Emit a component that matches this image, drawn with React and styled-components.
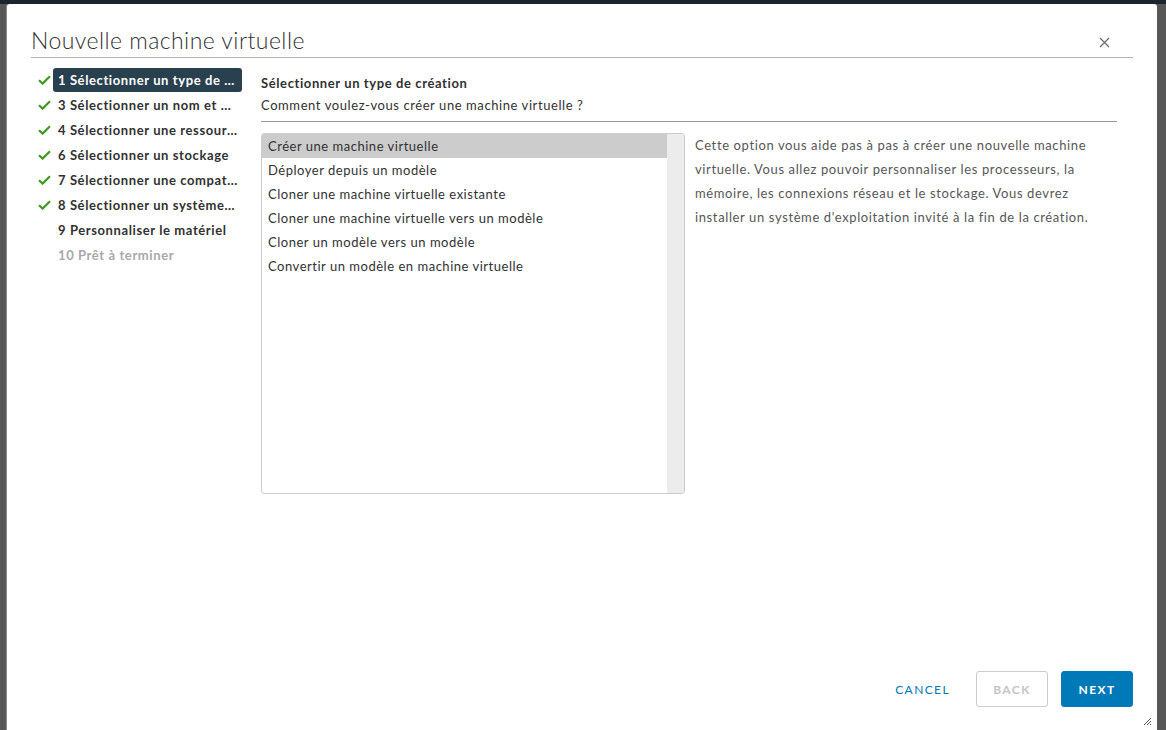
import React from "react";
import styled, { createGlobalStyle } from "styled-components";

const GlobalStyle = createGlobalStyle`
  html, body {
    margin: 0;
    padding: 0;
    height: 100%;
    overflow: hidden;
  }
  body {
    font-family: Lato, "Noto Sans", "Liberation Sans", sans-serif;
    background: #575757;
    color: #313131;
  }
`;

// styled-components
const Backdrop = styled.div`
  height: 730px;
  background: linear-gradient(#1c252b 0, #1c252b 4px, #575757 4px);
  padding: 4px 9px 0 7px;
  box-sizing: border-box;
`;

const Modal = styled.div`
  position: relative;
  height: 726px;
  background: #fff;
  border-radius: 3px 3px 0 0;
  box-shadow: -1px 0 0 #8a8a8a;
  display: flex;
  flex-direction: column;
  padding: 0 24px;
  box-sizing: border-box;
`;

const Header = styled.div`
  display: flex;
  align-items: flex-end;
  justify-content: space-between;
  height: 54px;
  padding-bottom: 3px;
  box-sizing: border-box;
  border-bottom: 1px solid #b3b3b3;
`;

const Title = styled.h3`
  margin: 0;
  font-size: 23px;
  line-height: 28px;
  font-weight: 300;
  letter-spacing: 0.45px;
  color: #313131;
`;

const CloseButton = styled.button`
  border: 0;
  background: none;
  padding: 0;
  margin: 0 23px 6px 0;
  width: 12px;
  height: 12px;
  display: flex;
  align-items: center;
  justify-content: center;
  cursor: pointer;
`;

const Body = styled.div`
  flex: 1;
  display: grid;
  grid-template-columns: 230px 1fr;
  padding-right: 16px;
`;

const Nav = styled.ul`
  list-style: none;
  margin: 0;
  padding: 10px 0 0 7px;
`;

const NavItem = styled.li`
  display: flex;
  align-items: center;
  height: 24px;
  margin-bottom: 1px;
`;

const CheckSlot = styled.span`
  width: 15px;
  display: flex;
  align-items: center;
  justify-content: flex-start;
`;

const NavLabel = styled.span`
  width: 189px;
  box-sizing: border-box;
  height: 24px;
  line-height: 24px;
  padding: 0 4px 0 5px;
  border-radius: 3px;
  font-size: 13px;
  font-weight: 700;
  letter-spacing: 0.6px;
  white-space: nowrap;
  overflow: hidden;
  text-overflow: ellipsis;
  background: ${(p) => (p.$active ? "#29414e" : "transparent")};
  color: ${(p) => (p.$active ? "#fff" : p.$disabled ? "#a8a8a8" : "#313131")};
`;

const Content = styled.div`
  padding-top: 15px;
  display: flex;
  flex-direction: column;
`;

const StepHeading = styled.div`
  font-size: 13px;
  font-weight: 700;
  line-height: 20px;
  letter-spacing: 0.6px;
  color: #313131;
`;

const StepSub = styled.div`
  font-size: 13px;
  line-height: 20px;
  letter-spacing: 0.58px;
  margin-top: 2px;
  padding-bottom: 6px;
  border-bottom: 1px solid #9a9a9a;
  color: #313131;
`;

const Split = styled.div`
  display: flex;
  gap: 10px;
  margin-top: 11px;
`;

const ListBox = styled.div`
  width: 424px;
  height: 361px;
  box-sizing: border-box;
  border: 1px solid #ccc;
  border-radius: 3px;
  display: flex;
  overflow: hidden;
`;

const Options = styled.ul`
  list-style: none;
  margin: 0;
  padding: 0;
  flex: 1;
`;

const Option = styled.li`
  height: 24px;
  line-height: 24px;
  padding: 0 6px;
  font-size: 13px;
  letter-spacing: 0.52px;
  color: #313131;
  background: ${(p) => (p.$selected ? "#ccc" : "transparent")};
  cursor: pointer;
`;

const ScrollTrack = styled.div`
  width: 17px;
  background: #ececec;
`;

const Description = styled.p`
  margin: 0;
  width: 422px;
  font-size: 13px;
  line-height: 24px;
  letter-spacing: 0.62px;
  color: #565656;
`;

const Footer = styled.div`
  display: flex;
  justify-content: flex-end;
  gap: 13px;
  padding: 0 0 23px;
`;

const Button = styled.button`
  height: 36px;
  min-width: 72px;
  padding: 0 12px;
  border-radius: 3px;
  font-family: inherit;
  font-size: 12px;
  letter-spacing: 1.4px;
  text-transform: uppercase;
  cursor: pointer;
  border: 1px solid
    ${(p) =>
      p.$variant === "primary" ? "#0079b8" : p.$variant === "flat" ? "transparent" : "#ccc"};
  background: ${(p) => (p.$variant === "primary" ? "#0079b8" : "transparent")};
  color: ${(p) =>
    p.$variant === "primary" ? "#fff" : p.$variant === "flat" ? "#0079b8" : "#c4c4c4"};
  font-weight: ${(p) => (p.$variant === "flat" ? 400 : 700)};
`;

const ResizeGrip = styled.svg`
  position: absolute;
  right: 5px;
  bottom: 4px;
`;

const steps = [
  { label: "1 Sélectionner un type de création", done: true, active: true },
  { label: "3 Sélectionner un nom et un dossier", done: true },
  { label: "4 Sélectionner une ressource de calcul", done: true },
  { label: "6 Sélectionner un stockage", done: true },
  { label: "7 Sélectionner une compatibilité", done: true },
  { label: "8 Sélectionner un système d'exploitation invité", done: true },
  { label: "9 Personnaliser le matériel" },
  { label: "10 Prêt à terminer", disabled: true },
];

const options = [
  "Créer une machine virtuelle",
  "Déployer depuis un modèle",
  "Cloner une machine virtuelle existante",
  "Cloner une machine virtuelle vers un modèle",
  "Cloner un modèle vers un modèle",
  "Convertir un modèle en machine virtuelle",
];

const Check = () => (
  <svg width="13" height="10" viewBox="0 0 13 10">
    <path d="M1 5.2 L4.6 8.6 L12 1.2" fill="none" stroke="#3f9b1d" strokeWidth="2.2" />
  </svg>
);

// component
const App = () => {
  return (
    <>
      <GlobalStyle />
      <Backdrop>
        <Modal>
          <Header>
            <Title>Nouvelle machine virtuelle</Title>
            <CloseButton aria-label="Fermer">
              <svg width="11" height="11" viewBox="0 0 11 11">
                <path d="M1 1 L10 10 M10 1 L1 10" stroke="#6a6a6a" strokeWidth="1.2" />
              </svg>
            </CloseButton>
          </Header>
          <Body>
            <Nav>
              {steps.map((s) => (
                <NavItem key={s.label}>
                  <CheckSlot>{s.done && <Check />}</CheckSlot>
                  <NavLabel $active={s.active} $disabled={s.disabled}>
                    {s.label}
                  </NavLabel>
                </NavItem>
              ))}
            </Nav>
            <Content>
              <StepHeading>Sélectionner un type de création</StepHeading>
              <StepSub>Comment voulez-vous créer une machine virtuelle ?</StepSub>
              <Split>
                <ListBox>
                  <Options>
                    {options.map((o, i) => (
                      <Option key={o} $selected={i === 0}>
                        {o}
                      </Option>
                    ))}
                  </Options>
                  <ScrollTrack />
                </ListBox>
                <Description>
                  Cette option vous aide pas à pas à créer une nouvelle machine
                  virtuelle. Vous allez pouvoir personnaliser les processeurs, la
                  mémoire, les connexions réseau et le stockage. Vous devrez
                  installer un système d'exploitation invité à la fin de la création.
                </Description>
              </Split>
            </Content>
          </Body>
          <Footer>
            <Button $variant="flat">Cancel</Button>
            <Button $variant="outline" disabled>
              Back
            </Button>
            <Button $variant="primary">Next</Button>
          </Footer>
          <ResizeGrip width="9" height="9" viewBox="0 0 9 9">
            <path d="M8 1 L1 8 M8 4 L4 8 M8 7 L7 8" stroke="#555" strokeWidth="1" />
          </ResizeGrip>
        </Modal>
      </Backdrop>
    </>
  );
};

export default App;
